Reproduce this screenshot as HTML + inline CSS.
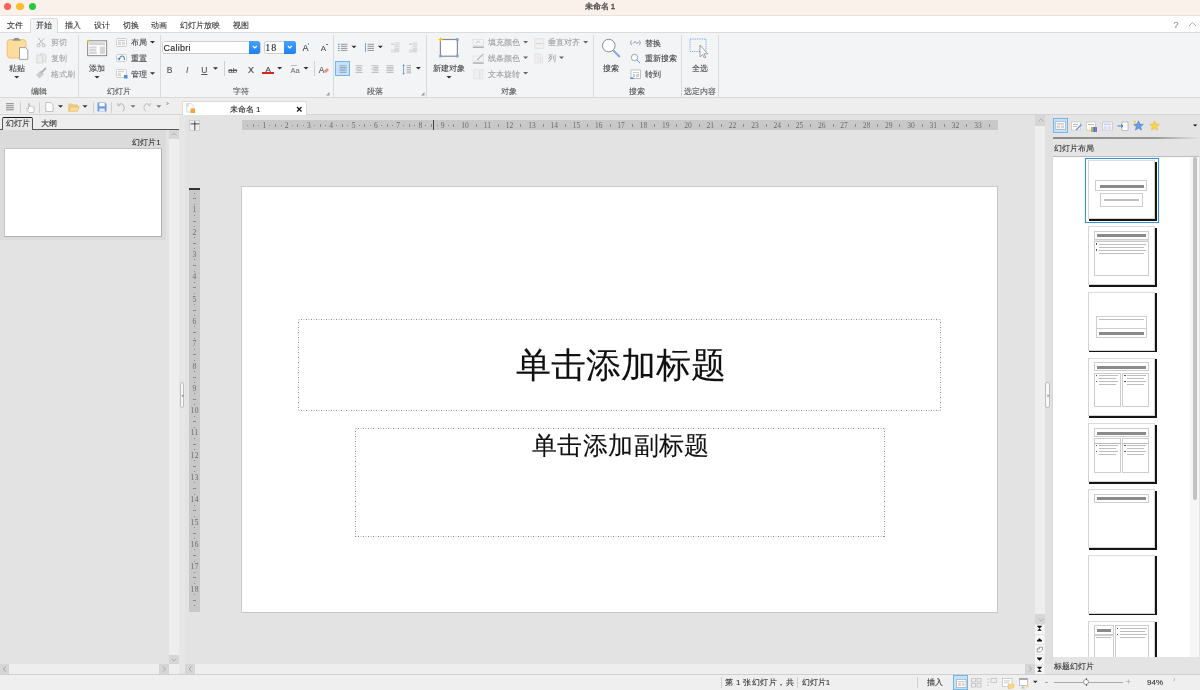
<!DOCTYPE html><html><head><meta charset="utf-8"><style>
*{margin:0;padding:0;box-sizing:border-box}
html,body{width:1200px;height:690px;overflow:hidden;background:#e3e3e3;font-family:"Liberation Sans",sans-serif;color:#333}
.a{position:absolute}
.t{position:absolute;white-space:nowrap;line-height:1;font-size:8px;-webkit-text-stroke:0.1px currentColor}
.sep{position:absolute;width:1px;background:#d6d6d6}
.arr{position:absolute;width:0;height:0;border-left:2.5px solid transparent;border-right:2.5px solid transparent;border-top:2.5px solid #333}
svg{position:absolute;overflow:visible}
</style></head><body><div style="position:absolute;left:0;top:0;width:1200px;height:690px;overflow:hidden;will-change:transform">
<div class="a" style="left:0px;top:0px;width:1200px;height:16px;background:#fbf1eb;border-bottom:1px solid #e9e2de"></div>
<div class="a" style="left:3.8px;top:3px;width:7.4px;height:7.4px;background:#fe5f57;border-radius:50%"></div>
<div class="a" style="left:16.3px;top:3px;width:7.4px;height:7.4px;background:#febc2e;border-radius:50%"></div>
<div class="a" style="left:28.8px;top:3px;width:7.4px;height:7.4px;background:#28c840;border-radius:50%"></div>
<div class="t" style="left:584.5px;top:3.30px;font-size:8px;color:#4a4a4a;-webkit-text-stroke:0.35px #4a4a4a">未命名 1</div>
<div class="a" style="left:0px;top:16px;width:1200px;height:17px;background:#fff;border-bottom:1px solid #dcdcdc"></div>
<div class="a" style="left:29.5px;top:17.5px;width:28.5px;height:16px;background:#f3f4f6;border:1px solid #dcdcdc;border-bottom:none;border-radius:2px 2px 0 0"></div>
<div class="t" style="left:7px;top:22.00px;font-size:8px;color:#333;">文件</div>
<div class="t" style="left:36px;top:22.00px;font-size:8px;color:#333;">开始</div>
<div class="t" style="left:65px;top:22.00px;font-size:8px;color:#333;">插入</div>
<div class="t" style="left:94px;top:22.00px;font-size:8px;color:#333;">设计</div>
<div class="t" style="left:122.5px;top:22.00px;font-size:8px;color:#333;">切换</div>
<div class="t" style="left:151px;top:22.00px;font-size:8px;color:#333;">动画</div>
<div class="t" style="left:180px;top:22.00px;font-size:8px;color:#333;">幻灯片放映</div>
<div class="t" style="left:233px;top:22.00px;font-size:8px;color:#333;">视图</div>
<div class="t" style="left:1173.5px;top:21.05px;font-size:9px;color:#888;">?</div>
<svg style="left:1188px;top:21px" width="10" height="6" viewBox="0 0 10 6"><path d="M1 5 L4.5 1.5 L8 5" fill="none" stroke="#aaa" stroke-width="1"/></svg>
<div class="a" style="left:0px;top:33px;width:1200px;height:65px;background:#f3f4f6;border-bottom:1px solid #d9d9d9"></div>
<div class="a" style="left:78px;top:35px;width:1px;height:62px;background:#dadada"></div>
<div class="a" style="left:159.5px;top:35px;width:1px;height:62px;background:#dadada"></div>
<div class="a" style="left:332.5px;top:35px;width:1px;height:62px;background:#dadada"></div>
<div class="a" style="left:425.5px;top:35px;width:1px;height:62px;background:#dadada"></div>
<div class="a" style="left:592.5px;top:35px;width:1px;height:62px;background:#dadada"></div>
<div class="a" style="left:681px;top:35px;width:1px;height:62px;background:#dadada"></div>
<div class="a" style="left:718px;top:35px;width:1px;height:62px;background:#dadada"></div>
<svg style="left:6px;top:37px" width="24" height="24" viewBox="0 0 24 24"><rect x="1.2" y="2.6" width="18.8" height="18.4" rx="3" fill="#fddc9c" stroke="#e6bd70" stroke-width="0.9"/><path d="M7.5 3 L8.5 1 L12.5 1 L13.5 3 Z" fill="#888"/><rect x="6.5" y="2.3" width="8" height="1.5" fill="#9a9a9a"/><path d="M13.5 10.6 L19.5 10.6 L21.8 12.9 L21.8 22.4 L13.5 22.4 Z" fill="#fff" stroke="#9a9a9a" stroke-width="0.9"/></svg>
<div class="t" style="left:8.8px;top:65.20px;font-size:8px;color:#444;">粘贴</div>
<svg style="left:0;top:0" width="1" height="1"><path d="M14.2 76.05 L19.2 76.05 L16.7 78.55 Z" fill="#333"/></svg>
<svg style="left:36px;top:37px" width="11" height="11" viewBox="0 0 11 11"><path d="M2.3 1.2 L7.5 7.2 M8 1.5 L2.8 7.2" stroke="#b0b0b0" stroke-width="0.9" fill="none"/><circle cx="2.5" cy="8.3" r="1.5" fill="none" stroke="#b0b0b0" stroke-width="0.8"/><circle cx="7.6" cy="8.3" r="1.5" fill="none" stroke="#b0b0b0" stroke-width="0.8"/></svg>
<div class="t" style="left:50.5px;top:39.30px;font-size:8px;color:#a6a6a6;">剪切</div>
<svg style="left:35.5px;top:52.5px" width="11" height="11" viewBox="0 0 11 11"><path d="M4.5 0.8 L8.5 0.8 L10 2.3 L10 8.8 L4.5 8.8 Z" fill="#e9e9e9" stroke="#cfcfcf" stroke-width="0.7"/><path d="M0.8 2 L5 2 L6.5 3.5 L6.5 10 L0.8 10 Z" fill="#ececec" stroke="#cfcfcf" stroke-width="0.7"/></svg>
<div class="t" style="left:51px;top:54.90px;font-size:8px;color:#a6a6a6;">复制</div>
<svg style="left:35px;top:67px" width="12" height="13" viewBox="0 0 12 13"><path d="M1 8 L5.5 3.5 L9 7 L4.5 11.5 Z" fill="#cdcdcd"/><path d="M6.5 5.5 L10.5 1.5" stroke="#b3b3b3" stroke-width="1.8" stroke-linecap="round"/></svg>
<div class="t" style="left:50.5px;top:70.80px;font-size:8px;color:#a6a6a6;">格式刷</div>
<div class="t" style="left:31px;top:87.90px;font-size:8px;color:#555;">编辑</div>
<svg style="left:86px;top:39px" width="22" height="18" viewBox="0 0 22 18"><rect x="1.7" y="1.8" width="19" height="14.9" fill="#fff" stroke="#7a7a7a" stroke-width="0.9"/><rect x="3.2" y="3.2" width="16" height="3" fill="#d4d4d4"/><path d="M3.2 7.5 H10.8 V9.6 H3.2Z M3.2 10.1 H10.3 V12.3 H3.2Z M3.2 12.8 H10.8 V15 H3.2Z" fill="#d6d6d6"/><rect x="13.8" y="7.5" width="5.4" height="7.5" fill="#d6d6d6"/><path d="M2.3 0 L2.9 1.7 L4.6 2.3 L2.9 2.9 L2.3 4.6 L1.7 2.9 L0 2.3 L1.7 1.7 Z" fill="#f7d23a"/></svg>
<div class="t" style="left:89.3px;top:65.20px;font-size:8px;color:#444;">添加</div>
<svg style="left:0;top:0" width="1" height="1"><path d="M94.5 76.05 L99.5 76.05 L97 78.55 Z" fill="#333"/></svg>
<svg style="left:116px;top:38px" width="11" height="9" viewBox="0 0 11 9"><rect x="0.5" y="0.5" width="10" height="8" rx="1" fill="#fafafa" stroke="#c4c4c4" stroke-width="0.8"/><rect x="2" y="2" width="7" height="1.3" fill="#d0d0d0"/><rect x="2" y="4" width="3" height="3" fill="#d8d8d8"/><rect x="6" y="4" width="3" height="3" fill="#d8d8d8"/></svg>
<div class="t" style="left:130.6px;top:39.30px;font-size:8px;color:#444;">布局</div>
<svg style="left:0;top:0" width="1" height="1"><path d="M150.0 40.95 L155.0 40.95 L152.5 43.45 Z" fill="#333"/></svg>
<svg style="left:116px;top:54px" width="11" height="8" viewBox="0 0 11 8"><rect x="0.5" y="0.5" width="10" height="7" rx="1" fill="#fafafa" stroke="#c4c4c4" stroke-width="0.8"/><path d="M3 5.5 Q4.5 1.5 6.5 2 Q8.5 2.5 8.5 6" fill="none" stroke="#4a86c5" stroke-width="1.1"/><path d="M1.3 4.3 L3.2 6.5 L4.6 4.2 Z" fill="#4a86c5"/></svg>
<div class="t" style="left:130.6px;top:55.00px;font-size:8px;color:#444;">重置</div>
<svg style="left:116px;top:69px" width="12" height="10" viewBox="0 0 12 10"><rect x="0.5" y="0.5" width="10" height="8" rx="1" fill="#fafafa" stroke="#c4c4c4" stroke-width="0.8"/><rect x="2" y="2" width="6" height="1.2" fill="#d0d0d0"/><rect x="2" y="4" width="3" height="3" fill="#dadada"/><rect x="8" y="6" width="3.5" height="3.5" fill="#4a90d9"/></svg>
<div class="t" style="left:130.6px;top:70.80px;font-size:8px;color:#444;">管理</div>
<svg style="left:0;top:0" width="1" height="1"><path d="M150.0 72.25 L155.0 72.25 L152.5 74.75 Z" fill="#333"/></svg>
<div class="t" style="left:107px;top:87.90px;font-size:8px;color:#555;">幻灯片</div>
<div class="a" style="left:161.7px;top:41.2px;width:99px;height:12.6px;background:#fff;border:1px solid #cdcdcd;border-radius:2.5px"></div>
<div class="a" style="left:249.1px;top:41px;width:11.4px;height:12.8px;background:linear-gradient(#47a3fb,#1d7ff2);border-radius:0 2.5px 2.5px 0"></div>
<svg style="left:251px;top:45px" width="8" height="5" viewBox="0 0 8 5"><path d="M1.8 1 L3.8 3 L5.8 1" fill="none" stroke="#fff" stroke-width="1.1"/></svg>
<div class="t" style="left:163.5px;top:44.15px;font-size:9px;color:#222;letter-spacing:0.25px">Calibri</div>
<div class="a" style="left:263.5px;top:41.2px;width:32px;height:12.6px;background:#fff;border:1px solid #cdcdcd;border-radius:2.5px"></div>
<div class="a" style="left:284.2px;top:41px;width:11.4px;height:12.8px;background:linear-gradient(#47a3fb,#1d7ff2);border-radius:0 2.5px 2.5px 0"></div>
<svg style="left:286px;top:45px" width="8" height="5" viewBox="0 0 8 5"><path d="M1.8 1 L3.8 3 L5.8 1" fill="none" stroke="#fff" stroke-width="1.1"/></svg>
<div class="t" style="left:265.3px;top:43.10px;font-size:10px;color:#222;font-family:Liberation Serif,serif;letter-spacing:0.9px">18</div>
<div class="t" style="left:302.6px;top:44.35px;font-size:9px;color:#444;">A</div>
<div class="a" style="left:307.5px;top:43.2px;width:1.6px;height:1.6px;background:#4a90d9;border-radius:50%"></div>
<div class="t" style="left:320.8px;top:45.20px;font-size:8px;color:#555;">A</div>
<div class="a" style="left:325.5px;top:44px;width:2.2px;height:0.8px;background:#777"></div>
<div class="t" style="left:166.8px;top:66.17px;font-size:8.5px;color:#555;">B</div>
<div class="t" style="left:186px;top:66.17px;font-size:8.5px;color:#555;font-style:italic">I</div>
<div class="t" style="left:201.3px;top:66.17px;font-size:8.5px;color:#555;text-decoration:underline">U</div>
<svg style="left:0;top:0" width="1" height="1"><path d="M213.0 67.15 L218.0 67.15 L215.5 69.65 Z" fill="#333"/></svg>
<div class="a" style="left:223.5px;top:61px;width:1px;height:15px;background:#d0d0d0"></div>
<div class="t" style="left:228.3px;top:66.80px;font-size:8px;color:#555;text-decoration:line-through">ab</div>
<div class="t" style="left:248px;top:66.15px;font-size:9px;color:#444;">X</div>
<div class="t" style="left:265.6px;top:65.80px;font-size:8px;color:#444;">A</div>
<div class="a" style="left:262.2px;top:72.3px;width:11.7px;height:2px;background:#e02020"></div>
<svg style="left:0;top:0" width="1" height="1"><path d="M277.2 67.05 L282.2 67.05 L279.7 69.55 Z" fill="#333"/></svg>
<div class="t" style="left:290.4px;top:67.02px;font-size:7.5px;color:#777;">Aa</div>
<div class="a" style="left:291px;top:64.5px;width:6px;height:0.7px;background:#bbb"></div>
<svg style="left:0;top:0" width="1" height="1"><path d="M303.5 67.05 L308.5 67.05 L306 69.55 Z" fill="#333"/></svg>
<div class="a" style="left:313.7px;top:61px;width:1px;height:15px;background:#d0d0d0"></div>
<div class="t" style="left:318.7px;top:66.17px;font-size:8.5px;color:#555;">A</div>
<svg style="left:322px;top:66px" width="8" height="8" viewBox="0 0 8 8"><path d="M2 5 L5 2 L7 4 L4 7 Z" fill="#f08888"/></svg>
<div class="t" style="left:141px;width:200px;text-align:center;top:87.90px;font-size:8px;color:#555;">字符</div>
<svg style="left:326px;top:92px" width="4" height="4" viewBox="0 0 4 4"><path d="M3.5 0 L3.5 3.5 L0 3.5 Z" fill="#999"/></svg>
<svg style="left:337px;top:43px" width="12" height="10" viewBox="0 0 12 10"><rect x="1" y="0.8" width="1.6" height="1.1" fill="#6b9bd6"/><rect x="1" y="2.8499999999999996" width="1.6" height="1.1" fill="#6b9bd6"/><rect x="1" y="4.8999999999999995" width="1.6" height="1.1" fill="#6b9bd6"/><rect x="1" y="6.949999999999999" width="1.6" height="1.1" fill="#6b9bd6"/><rect x="3.8" y="0.8" width="6.5" height="0.9" fill="#8a8a8a"/><rect x="3.8" y="2.8499999999999996" width="6.5" height="0.9" fill="#8a8a8a"/><rect x="3.8" y="4.8999999999999995" width="6.5" height="0.9" fill="#8a8a8a"/><rect x="3.8" y="6.949999999999999" width="6.5" height="0.9" fill="#8a8a8a"/></svg>
<svg style="left:0;top:0" width="1" height="1"><path d="M351.5 45.75 L356.5 45.75 L354 48.25 Z" fill="#333"/></svg>
<svg style="left:364px;top:43px" width="12" height="10" viewBox="0 0 12 10"><rect x="1" y="0" width="0.9" height="8.8" fill="#6b9bd6"/><rect x="3.5" y="0.8" width="6.5" height="0.9" fill="#8a8a8a"/><rect x="3.5" y="2.8499999999999996" width="6.5" height="0.9" fill="#8a8a8a"/><rect x="3.5" y="4.8999999999999995" width="6.5" height="0.9" fill="#8a8a8a"/><rect x="3.5" y="6.949999999999999" width="6.5" height="0.9" fill="#8a8a8a"/></svg>
<svg style="left:0;top:0" width="1" height="1"><path d="M377.8 45.75 L382.8 45.75 L380.3 48.25 Z" fill="#333"/></svg>
<svg style="left:390px;top:42px" width="12" height="11" viewBox="0 0 12 11"><rect x="1" y="1.5" width="3" height="1.2" fill="#c9c9c9"/><rect x="4.5" y="0.5" width="5" height="1" fill="#d2d2d2"/><rect x="4.5" y="2.4" width="5" height="1" fill="#d2d2d2"/><rect x="4.5" y="4.3" width="5" height="1" fill="#d2d2d2"/><rect x="4.5" y="6.199999999999999" width="5" height="1" fill="#d2d2d2"/><rect x="4.5" y="8.1" width="5" height="1" fill="#d2d2d2"/><rect x="1" y="7.5" width="8" height="1" fill="#d2d2d2"/><rect x="1" y="9.4" width="8" height="1" fill="#d2d2d2"/></svg>
<svg style="left:407.5px;top:42px" width="12" height="11" viewBox="0 0 12 11"><rect x="1" y="1.5" width="3" height="1.2" fill="#c9c9c9"/><rect x="4.5" y="0.5" width="5" height="1" fill="#d2d2d2"/><rect x="4.5" y="2.4" width="5" height="1" fill="#d2d2d2"/><rect x="4.5" y="4.3" width="5" height="1" fill="#d2d2d2"/><rect x="4.5" y="6.199999999999999" width="5" height="1" fill="#d2d2d2"/><rect x="4.5" y="8.1" width="5" height="1" fill="#d2d2d2"/><rect x="1" y="7.5" width="8" height="1" fill="#d2d2d2"/><rect x="1" y="9.4" width="8" height="1" fill="#d2d2d2"/></svg>
<div class="a" style="left:335.3px;top:61.2px;width:14.5px;height:15px;background:#c6e2fb;border:1px solid #74b4ee"></div>
<svg style="left:338.5px;top:64.5px" width="9" height="9" viewBox="0 0 9 9"><rect x="0.5" y="0.3" width="7" height="0.9" fill="#8ca3bd"/><rect x="0.5" y="1.95" width="7" height="0.9" fill="#8ca3bd"/><rect x="0.5" y="3.5999999999999996" width="7" height="0.9" fill="#8ca3bd"/><rect x="0.5" y="5.249999999999999" width="7" height="0.9" fill="#8ca3bd"/><rect x="0.5" y="6.8999999999999995" width="7" height="0.9" fill="#8ca3bd"/></svg>
<svg style="left:354.5px;top:64.5px" width="9" height="9" viewBox="0 0 9 9"><rect x="0.5" y="0.3" width="7" height="0.9" fill="#b5b5b5"/><rect x="1.5" y="1.95" width="5" height="0.9" fill="#b5b5b5"/><rect x="0.5" y="3.5999999999999996" width="7" height="0.9" fill="#b5b5b5"/><rect x="1.5" y="5.249999999999999" width="5" height="0.9" fill="#b5b5b5"/><rect x="0.5" y="6.8999999999999995" width="7" height="0.9" fill="#b5b5b5"/></svg>
<svg style="left:370.5px;top:64.5px" width="9" height="9" viewBox="0 0 9 9"><rect x="0.5" y="0.3" width="7" height="0.9" fill="#b5b5b5"/><rect x="2.5" y="1.95" width="5" height="0.9" fill="#b5b5b5"/><rect x="0.5" y="3.5999999999999996" width="7" height="0.9" fill="#b5b5b5"/><rect x="2.5" y="5.249999999999999" width="5" height="0.9" fill="#b5b5b5"/><rect x="0.5" y="6.8999999999999995" width="7" height="0.9" fill="#b5b5b5"/></svg>
<svg style="left:385.7px;top:64.5px" width="9" height="9" viewBox="0 0 9 9"><rect x="0.5" y="0.3" width="7" height="0.9" fill="#b5b5b5"/><rect x="0.5" y="1.95" width="7" height="0.9" fill="#b5b5b5"/><rect x="0.5" y="3.5999999999999996" width="7" height="0.9" fill="#b5b5b5"/><rect x="0.5" y="5.249999999999999" width="7" height="0.9" fill="#b5b5b5"/><rect x="0.5" y="6.8999999999999995" width="7" height="0.9" fill="#b5b5b5"/></svg>
<svg style="left:402px;top:63.5px" width="11" height="11" viewBox="0 0 11 11"><rect x="1.2" y="1" width="0.9" height="9" fill="#5c95d6"/><path d="M0.2 1.8 L1.65 0.3 L3.1 1.8 Z M0.2 9.3 L1.65 10.8 L3.1 9.3Z" fill="#5c95d6"/><rect x="4.5" y="1.2" width="4.5" height="0.9" fill="#a8a8a8"/><rect x="4.5" y="3.0" width="4.5" height="0.9" fill="#a8a8a8"/><rect x="4.5" y="4.8" width="4.5" height="0.9" fill="#a8a8a8"/><rect x="4.5" y="6.6000000000000005" width="4.5" height="0.9" fill="#a8a8a8"/><rect x="4.5" y="8.4" width="4.5" height="0.9" fill="#a8a8a8"/></svg>
<svg style="left:0;top:0" width="1" height="1"><path d="M415.9 67.05 L420.9 67.05 L418.4 69.55 Z" fill="#333"/></svg>
<div class="t" style="left:366.8px;top:87.90px;font-size:8px;color:#555;">段落</div>
<svg style="left:421.2px;top:92px" width="4" height="4" viewBox="0 0 4 4"><path d="M3.5 0 L3.5 3.5 L0 3.5 Z" fill="#999"/></svg>
<svg style="left:438px;top:37px" width="22" height="22" viewBox="0 0 22 22"><rect x="2.4" y="2.5" width="17" height="16.7" fill="#fff" stroke="#8a8a8a" stroke-width="1.2"/><rect x="18" y="1.2" width="2.6" height="2.6" fill="#7f9fe0"/><rect x="1.2" y="17.8" width="2.6" height="2.6" fill="#7f9fe0"/><rect x="18" y="17.8" width="2.6" height="2.6" fill="#7f9fe0"/><path d="M2.5 0 L3.2 1.8 L5 2.5 L3.2 3.2 L2.5 5 L1.8 3.2 L0 2.5 L1.8 1.8 Z" fill="#f5c400"/></svg>
<div class="t" style="left:433px;top:65.20px;font-size:8px;color:#444;">新建对象</div>
<svg style="left:0;top:0" width="1" height="1"><path d="M446.5 76.05 L451.5 76.05 L449 78.55 Z" fill="#333"/></svg>
<svg style="left:472px;top:38px" width="13" height="11" viewBox="0 0 13 11"><rect x="1" y="1.5" width="10.5" height="6" fill="#f4f4f4" stroke="#dcdcdc" stroke-width="0.7"/><path d="M4 5.5 Q6 1.5 8 5" fill="none" stroke="#b9b9b9" stroke-width="0.8"/><rect x="0.8" y="8.5" width="11" height="1.5" fill="#b0b0b0"/></svg>
<div class="t" style="left:487.5px;top:39.30px;font-size:8px;color:#a0a0a0;">填充颜色</div>
<svg style="left:0;top:0" width="1" height="1"><path d="M523.1 40.95 L528.1 40.95 L525.6 43.45 Z" fill="#666"/></svg>
<svg style="left:472px;top:52.5px" width="13" height="12" viewBox="0 0 13 12"><rect x="1" y="3" width="10.5" height="5" fill="#f4f4f4" stroke="#dcdcdc" stroke-width="0.7"/><path d="M5 7 L11.5 0.8" stroke="#b5b5b5" stroke-width="1.1"/><rect x="0.8" y="9.3" width="11" height="1.5" fill="#b0b0b0"/></svg>
<div class="t" style="left:487.5px;top:54.80px;font-size:8px;color:#a0a0a0;">线条颜色</div>
<svg style="left:0;top:0" width="1" height="1"><path d="M523.1 56.45 L528.1 56.45 L525.6 58.95 Z" fill="#666"/></svg>
<svg style="left:473px;top:68.5px" width="11" height="11" viewBox="0 0 11 11"><rect x="0.8" y="0.8" width="9" height="9" fill="#f0f0f0" stroke="#dedede" stroke-width="0.8"/><rect x="6.5" y="1.5" width="0.7" height="7.5" fill="#d0d0d0"/></svg>
<div class="t" style="left:487.5px;top:70.50px;font-size:8px;color:#a0a0a0;">文本旋转</div>
<svg style="left:0;top:0" width="1" height="1"><path d="M523.1 72.05 L528.1 72.05 L525.6 74.55 Z" fill="#666"/></svg>
<svg style="left:533.5px;top:37.5px" width="11" height="11" viewBox="0 0 11 11"><rect x="0.8" y="0.8" width="9" height="9.5" fill="#f0f0f0" stroke="#dedede" stroke-width="0.8"/><rect x="2" y="5" width="6.5" height="0.8" fill="#d0d0d0"/></svg>
<div class="t" style="left:547.5px;top:39.30px;font-size:8px;color:#a0a0a0;">垂直对齐</div>
<svg style="left:0;top:0" width="1" height="1"><path d="M583.1 40.95 L588.1 40.95 L585.6 43.45 Z" fill="#666"/></svg>
<svg style="left:534px;top:53px" width="10" height="11" viewBox="0 0 10 11"><path d="M1 1 L6 1 L8.5 3.5 L8.5 10 L1 10 Z" fill="#f0f0f0" stroke="#dedede" stroke-width="0.8"/><rect x="3.5" y="3" width="0.7" height="6" fill="#d5d5d5"/><rect x="6" y="4" width="0.7" height="5" fill="#d5d5d5"/></svg>
<div class="t" style="left:547.5px;top:54.80px;font-size:8px;color:#a0a0a0;">列</div>
<svg style="left:0;top:0" width="1" height="1"><path d="M559.0 56.45 L564.0 56.45 L561.5 58.95 Z" fill="#666"/></svg>
<div class="t" style="left:408.75px;width:200px;text-align:center;top:87.90px;font-size:8px;color:#555;">对象</div>
<svg style="left:600px;top:37px" width="22" height="22" viewBox="0 0 22 22"><circle cx="8.75" cy="8.6" r="6.3" fill="#fff" stroke="#8a8a8a" stroke-width="1"/><path d="M13.3 13.4 L19.8 20" stroke="#7ea6e6" stroke-width="1.9"/></svg>
<div class="t" style="left:511px;width:200px;text-align:center;top:65.20px;font-size:8px;color:#444;">搜索</div>
<svg style="left:630px;top:38.5px" width="11" height="8" viewBox="0 0 11 8"><path d="M1.2 1.5 Q0 4 1.5 6" fill="none" stroke="#777" stroke-width="0.7"/><path d="M9.5 1.5 Q11 4 9.5 6" fill="none" stroke="#777" stroke-width="0.7"/><path d="M3 4.5 L5 2.5 L7 4.5 L8.5 3" fill="none" stroke="#4a8ad0" stroke-width="0.9"/></svg>
<div class="t" style="left:645px;top:39.50px;font-size:8px;color:#444;">替换</div>
<svg style="left:630px;top:53px" width="11" height="11" viewBox="0 0 11 11"><circle cx="4.5" cy="4.5" r="3.2" fill="#fff" stroke="#8a8a8a" stroke-width="0.8"/><path d="M6.8 6.8 L10 10" stroke="#5a9be0" stroke-width="1"/></svg>
<div class="t" style="left:645px;top:55.00px;font-size:8px;color:#444;">重新搜索</div>
<svg style="left:629.5px;top:68.5px" width="12" height="12" viewBox="0 0 12 12"><rect x="1" y="1" width="9.5" height="8.5" fill="#fff" stroke="#b5b5b5" stroke-width="0.8"/><rect x="3" y="3" width="6" height="1" fill="#ccc"/><rect x="3" y="5" width="2" height="3" fill="#ccc"/><rect x="6" y="5" width="3" height="3" fill="#ccc"/><rect x="0.5" y="8.5" width="2.8" height="1.5" fill="#3a7bd5"/></svg>
<div class="t" style="left:645px;top:70.50px;font-size:8px;color:#444;">转到</div>
<div class="t" style="left:536.9px;width:200px;text-align:center;top:87.90px;font-size:8px;color:#555;">搜索</div>
<svg style="left:688px;top:37px" width="24" height="22" viewBox="0 0 24 22"><rect x="2" y="2" width="16" height="12.5" fill="none" stroke="#5a9be0" stroke-width="0.8" stroke-dasharray="1.3 1"/><path d="M12 8 L12 20 L14.5 17.5 L16.5 21 L17.8 20.3 L15.8 16.8 L19.5 16.8 Z" fill="#fff" stroke="#888" stroke-width="0.8" stroke-linejoin="round"/></svg>
<div class="t" style="left:599.6px;width:200px;text-align:center;top:65.20px;font-size:8px;color:#444;">全选</div>
<div class="t" style="left:599.6px;width:200px;text-align:center;top:87.90px;font-size:8px;color:#555;">选定内容</div>
<div class="a" style="left:0px;top:98px;width:1200px;height:17px;background:#eeeeee;border-bottom:1px solid #d5d5d5"></div>
<svg style="left:6px;top:103px" width="8" height="8" viewBox="0 0 8 8"><rect x="0" y="0.0" width="7.8" height="1.2" fill="#9a9a9a"/><rect x="0" y="2.05" width="7.8" height="1.2" fill="#9a9a9a"/><rect x="0" y="4.1" width="7.8" height="1.2" fill="#9a9a9a"/><rect x="0" y="6.1499999999999995" width="7.8" height="1.2" fill="#9a9a9a"/></svg>
<div class="a" style="left:20.4px;top:101.5px;width:1px;height:11.0px;background:#cfcfcf"></div>
<svg style="left:25.5px;top:101.5px" width="9" height="11" viewBox="0 0 9 11"><path d="M2.5 1.5 L2.5 7 L1 6 Q0.3 6.5 1 7.5 L3 10.5 L7.5 10.5 Q8.3 9 8 6 L8 4.8 Q7.2 4 6.4 4.8 Q5.8 4 5 4.6 Q4.2 3.9 3.6 4.5 L3.6 1.5 Q3 0.7 2.5 1.5Z" fill="#fff" stroke="#a9a9a9" stroke-width="0.7"/><circle cx="3" cy="1.2" r="1" fill="#c9d6f0"/></svg>
<div class="a" style="left:39.4px;top:101.5px;width:1px;height:11.0px;background:#cfcfcf"></div>
<svg style="left:44.5px;top:102px" width="9" height="10" viewBox="0 0 9 10"><path d="M0.8 0.5 L5.5 0.5 L8 3 L8 9.5 L0.8 9.5 Z" fill="#fff" stroke="#aaaaaa" stroke-width="0.7"/></svg>
<svg style="left:0;top:0" width="1" height="1"><path d="M58.0 105.15 L63.0 105.15 L60.5 107.65 Z" fill="#333"/></svg>
<svg style="left:67.5px;top:102.5px" width="12" height="9" viewBox="0 0 12 9"><path d="M0.8 1 L4 1 L5 2 L9.5 2 L9.5 3.5 L2.5 3.5 L0.8 8.3 Z" fill="#f4cf82" stroke="#e0b260" stroke-width="0.6"/><path d="M0.8 8.3 L2.5 3.8 L11.2 3.8 L9.5 8.3 Z" fill="#fddb97" stroke="#e0b260" stroke-width="0.6"/></svg>
<svg style="left:0;top:0" width="1" height="1"><path d="M82.5 105.15 L87.5 105.15 L85 107.65 Z" fill="#333"/></svg>
<div class="a" style="left:92.5px;top:101.5px;width:1px;height:11.0px;background:#cfcfcf"></div>
<svg style="left:97px;top:102px" width="10" height="10" viewBox="0 0 10 10"><path d="M0.5 0.5 L8 0.5 L9.5 2 L9.5 9.5 L0.5 9.5 Z" fill="#6b99e2"/><rect x="2.3" y="1" width="5.4" height="3.3" fill="#fff"/><rect x="2.3" y="6.5" width="5.4" height="3" fill="#e8eef8"/></svg>
<div class="a" style="left:111.3px;top:101.5px;width:1px;height:11.0px;background:#cfcfcf"></div>
<svg style="left:116.5px;top:102px" width="8" height="10" viewBox="0 0 8 10"><path d="M6 9.5 Q8.5 6 6.5 3 Q4.5 0.5 1.5 2.5" fill="none" stroke="#b0b0b0" stroke-width="0.9"/><path d="M0.5 0.8 L1 4 L3.5 2.8" fill="none" stroke="#b0b0b0" stroke-width="0.8"/></svg>
<svg style="left:0;top:0" width="1" height="1"><path d="M130.5 105.15 L135.5 105.15 L133 107.65 Z" fill="#777"/></svg>
<svg style="left:142.5px;top:102px" width="8" height="10" viewBox="0 0 8 10"><path d="M3 9.5 Q-0.5 6 1.5 3 Q3.5 0.5 6.5 2.5" fill="none" stroke="#bbbbbb" stroke-width="0.9"/><path d="M7.5 0.8 L7 4 L4.5 2.8" fill="none" stroke="#bbbbbb" stroke-width="0.8"/></svg>
<svg style="left:0;top:0" width="1" height="1"><path d="M156.3 105.15 L161.3 105.15 L158.8 107.65 Z" fill="#777"/></svg>
<svg style="left:166px;top:102px" width="4" height="4" viewBox="0 0 4 4"><path d="M0.5 0.5 L2.5 1.5 L0.5 2.5" fill="none" stroke="#777" stroke-width="0.7"/></svg>
<div class="a" style="left:182.3px;top:100.7px;width:125px;height:15px;background:#fff;border:1px solid #dadada;border-bottom:none;border-radius:2px 2px 0 0"></div>
<svg style="left:186px;top:103px" width="10" height="11" viewBox="0 0 10 11"><path d="M0.8 0.5 L5 0.5 L7 2.5 L7 9 L0.8 9 Z" fill="#fff" stroke="#c0c0c0" stroke-width="0.6"/><rect x="0.8" y="0.8" width="2" height="3" fill="#f7d9b0"/><rect x="4.5" y="5.5" width="4.5" height="4.5" fill="#f6a53a"/></svg>
<div class="t" style="left:145px;width:200px;text-align:center;top:105.80px;font-size:8px;color:#222;">未命名 1</div>
<svg style="left:296px;top:105.5px" width="7" height="7" viewBox="0 0 7 7"><path d="M1 1 L5.5 5.5 M5.5 1 L1 5.5" stroke="#111" stroke-width="1.1"/></svg>
<div class="a" style="left:0px;top:115px;width:179px;height:15px;background:#eeeeee"></div>
<div class="a" style="left:0px;top:129px;width:179px;height:1.2px;background:#555"></div>
<div class="a" style="left:2.3px;top:117px;width:30.7px;height:13.2px;background:#e8e8e8;border:1px solid #555;border-top:1.4px solid #1a1a1a;border-bottom:none;border-radius:2px 2px 0 0"></div>
<div class="t" style="left:6px;top:120.30px;font-size:8px;color:#333;">幻灯片</div>
<div class="t" style="left:40.8px;top:120.30px;font-size:8px;color:#333;">大纲</div>
<div class="a" style="left:0px;top:130.2px;width:169px;height:543px;background:#e3e3e3"></div>
<div class="a" style="left:0px;top:130.2px;width:166px;height:110.3px;background:#dbdbdb"></div>
<div class="t" style="left:-39.19999999999999px;width:200px;text-align:right;top:138.80px;font-size:8px;color:#333;">幻灯片1</div>
<div class="a" style="left:4px;top:148px;width:158.2px;height:89.3px;background:#fff;border:1px solid #c4c4c4;border-right:1.3px solid #b0b0b0;border-bottom:1.3px solid #b0b0b0"></div>
<div class="a" style="left:169px;top:130.2px;width:10px;height:534px;background:#eeeeee"></div>
<div class="a" style="left:169px;top:130.2px;width:10px;height:8.6px;background:#d6d6d6"></div>
<svg style="left:171px;top:132px" width="6" height="4" viewBox="0 0 6 4"><path d="M0.5 3.5 L3 1 L5.5 3.5" fill="none" stroke="#aaa" stroke-width="0.8"/></svg>
<div class="a" style="left:169px;top:654.5px;width:10px;height:9.5px;background:#d6d6d6"></div>
<svg style="left:171px;top:657.5px" width="6" height="4" viewBox="0 0 6 4"><path d="M0.5 0.5 L3 3 L5.5 0.5" fill="none" stroke="#aaa" stroke-width="0.8"/></svg>
<div class="a" style="left:0px;top:664px;width:169px;height:9.6px;background:#eeeeee"></div>
<div class="a" style="left:0px;top:664px;width:8.7px;height:9.6px;background:#d6d6d6"></div>
<svg style="left:1.8px;top:666px" width="6" height="6" viewBox="0 0 6 6"><path d="M3.8 0.6 L1.2 3 L3.8 5.4" fill="none" stroke="#999" stroke-width="0.9"/></svg>
<div class="a" style="left:159px;top:664px;width:10px;height:9.6px;background:#d6d6d6"></div>
<svg style="left:162px;top:666px" width="5" height="6" viewBox="0 0 5 6"><path d="M1 0.5 L3.5 3 L1 5.5" fill="none" stroke="#999" stroke-width="0.8"/></svg>
<div class="a" style="left:169px;top:664px;width:10px;height:9.6px;background:#eeeeee"></div>
<div class="a" style="left:179px;top:115px;width:6px;height:558px;background:#e6e6e6"></div>
<div class="a" style="left:179.6px;top:382.3px;width:4.8px;height:25.4px;background:#f7f7f7;border:1px solid #bdbdbd;border-radius:2px"></div>
<svg style="left:181px;top:393.5px" width="3" height="4" viewBox="0 0 3 4"><path d="M2.3 0.3 L0.3 1.8 L2.3 3.3 Z" fill="#8a8a8a"/></svg>
<div class="a" style="left:185px;top:115px;width:850px;height:549px;background:#e3e3e3"></div>
<div class="a" style="left:189.2px;top:119.7px;width:11.2px;height:11px;background:#efefef;border:1px solid #d0d0d0"></div>
<svg style="left:189.2px;top:119.7px" width="12" height="12" viewBox="0 0 12 12"><path d="M1.6 3.9 L10.2 3.9 M5.8 1.2 L5.8 10.2" stroke="#222" stroke-width="0.8"/></svg>
<div class="a" style="left:242px;top:120.1px;width:755.5px;height:9.9px;background:#c8c8c8"></div>
<div class="a" style="left:247.07px;top:124.6px;width:1px;height:1px;background:#8a8a8a"></div><div class="a" style="left:252.75px;top:123.6px;width:0.9px;height:3px;background:#8c8c8c"></div><div class="a" style="left:258.23px;top:124.6px;width:1px;height:1px;background:#8a8a8a"></div><div class="t" style="left:254.30px;width:20px;text-align:center;top:121.6px;font-size:7.5px;color:#6a6a6a;-webkit-text-stroke:0;font-family:Liberation Serif,serif">1</div><div class="a" style="left:269.38px;top:124.6px;width:1px;height:1px;background:#8a8a8a"></div><div class="a" style="left:275.05px;top:123.6px;width:0.9px;height:3px;background:#8c8c8c"></div><div class="a" style="left:280.52px;top:124.6px;width:1px;height:1px;background:#8a8a8a"></div><div class="t" style="left:276.60px;width:20px;text-align:center;top:121.6px;font-size:7.5px;color:#6a6a6a;-webkit-text-stroke:0;font-family:Liberation Serif,serif">2</div><div class="a" style="left:291.68px;top:124.6px;width:1px;height:1px;background:#8a8a8a"></div><div class="a" style="left:297.35px;top:123.6px;width:0.9px;height:3px;background:#8c8c8c"></div><div class="a" style="left:302.82px;top:124.6px;width:1px;height:1px;background:#8a8a8a"></div><div class="t" style="left:298.90px;width:20px;text-align:center;top:121.6px;font-size:7.5px;color:#6a6a6a;-webkit-text-stroke:0;font-family:Liberation Serif,serif">3</div><div class="a" style="left:313.98px;top:124.6px;width:1px;height:1px;background:#8a8a8a"></div><div class="a" style="left:319.65px;top:123.6px;width:0.9px;height:3px;background:#8c8c8c"></div><div class="a" style="left:325.12px;top:124.6px;width:1px;height:1px;background:#8a8a8a"></div><div class="t" style="left:321.20px;width:20px;text-align:center;top:121.6px;font-size:7.5px;color:#6a6a6a;-webkit-text-stroke:0;font-family:Liberation Serif,serif">4</div><div class="a" style="left:336.27px;top:124.6px;width:1px;height:1px;background:#8a8a8a"></div><div class="a" style="left:341.95px;top:123.6px;width:0.9px;height:3px;background:#8c8c8c"></div><div class="a" style="left:347.43px;top:124.6px;width:1px;height:1px;background:#8a8a8a"></div><div class="t" style="left:343.50px;width:20px;text-align:center;top:121.6px;font-size:7.5px;color:#6a6a6a;-webkit-text-stroke:0;font-family:Liberation Serif,serif">5</div><div class="a" style="left:358.57px;top:124.6px;width:1px;height:1px;background:#8a8a8a"></div><div class="a" style="left:364.25px;top:123.6px;width:0.9px;height:3px;background:#8c8c8c"></div><div class="a" style="left:369.73px;top:124.6px;width:1px;height:1px;background:#8a8a8a"></div><div class="t" style="left:365.80px;width:20px;text-align:center;top:121.6px;font-size:7.5px;color:#6a6a6a;-webkit-text-stroke:0;font-family:Liberation Serif,serif">6</div><div class="a" style="left:380.88px;top:124.6px;width:1px;height:1px;background:#8a8a8a"></div><div class="a" style="left:386.55px;top:123.6px;width:0.9px;height:3px;background:#8c8c8c"></div><div class="a" style="left:392.02px;top:124.6px;width:1px;height:1px;background:#8a8a8a"></div><div class="t" style="left:388.10px;width:20px;text-align:center;top:121.6px;font-size:7.5px;color:#6a6a6a;-webkit-text-stroke:0;font-family:Liberation Serif,serif">7</div><div class="a" style="left:403.18px;top:124.6px;width:1px;height:1px;background:#8a8a8a"></div><div class="a" style="left:408.85px;top:123.6px;width:0.9px;height:3px;background:#8c8c8c"></div><div class="a" style="left:414.33px;top:124.6px;width:1px;height:1px;background:#8a8a8a"></div><div class="t" style="left:410.40px;width:20px;text-align:center;top:121.6px;font-size:7.5px;color:#6a6a6a;-webkit-text-stroke:0;font-family:Liberation Serif,serif">8</div><div class="a" style="left:425.48px;top:124.6px;width:1px;height:1px;background:#8a8a8a"></div><div class="a" style="left:431.15px;top:123.6px;width:0.9px;height:3px;background:#8c8c8c"></div><div class="a" style="left:436.62px;top:124.6px;width:1px;height:1px;background:#8a8a8a"></div><div class="t" style="left:432.70px;width:20px;text-align:center;top:121.6px;font-size:7.5px;color:#6a6a6a;-webkit-text-stroke:0;font-family:Liberation Serif,serif">9</div><div class="a" style="left:447.77px;top:124.6px;width:1px;height:1px;background:#8a8a8a"></div><div class="a" style="left:453.45px;top:123.6px;width:0.9px;height:3px;background:#8c8c8c"></div><div class="t" style="left:455.00px;width:20px;text-align:center;top:121.6px;font-size:7.5px;color:#6a6a6a;-webkit-text-stroke:0;font-family:Liberation Serif,serif">10</div><div class="a" style="left:475.75px;top:123.6px;width:0.9px;height:3px;background:#8c8c8c"></div><div class="t" style="left:477.30px;width:20px;text-align:center;top:121.6px;font-size:7.5px;color:#6a6a6a;-webkit-text-stroke:0;font-family:Liberation Serif,serif">11</div><div class="a" style="left:498.05px;top:123.6px;width:0.9px;height:3px;background:#8c8c8c"></div><div class="t" style="left:499.60px;width:20px;text-align:center;top:121.6px;font-size:7.5px;color:#6a6a6a;-webkit-text-stroke:0;font-family:Liberation Serif,serif">12</div><div class="a" style="left:520.35px;top:123.6px;width:0.9px;height:3px;background:#8c8c8c"></div><div class="t" style="left:521.90px;width:20px;text-align:center;top:121.6px;font-size:7.5px;color:#6a6a6a;-webkit-text-stroke:0;font-family:Liberation Serif,serif">13</div><div class="a" style="left:542.65px;top:123.6px;width:0.9px;height:3px;background:#8c8c8c"></div><div class="t" style="left:544.20px;width:20px;text-align:center;top:121.6px;font-size:7.5px;color:#6a6a6a;-webkit-text-stroke:0;font-family:Liberation Serif,serif">14</div><div class="a" style="left:564.95px;top:123.6px;width:0.9px;height:3px;background:#8c8c8c"></div><div class="t" style="left:566.50px;width:20px;text-align:center;top:121.6px;font-size:7.5px;color:#6a6a6a;-webkit-text-stroke:0;font-family:Liberation Serif,serif">15</div><div class="a" style="left:587.25px;top:123.6px;width:0.9px;height:3px;background:#8c8c8c"></div><div class="t" style="left:588.80px;width:20px;text-align:center;top:121.6px;font-size:7.5px;color:#6a6a6a;-webkit-text-stroke:0;font-family:Liberation Serif,serif">16</div><div class="a" style="left:609.55px;top:123.6px;width:0.9px;height:3px;background:#8c8c8c"></div><div class="t" style="left:611.10px;width:20px;text-align:center;top:121.6px;font-size:7.5px;color:#6a6a6a;-webkit-text-stroke:0;font-family:Liberation Serif,serif">17</div><div class="a" style="left:631.85px;top:123.6px;width:0.9px;height:3px;background:#8c8c8c"></div><div class="t" style="left:633.40px;width:20px;text-align:center;top:121.6px;font-size:7.5px;color:#6a6a6a;-webkit-text-stroke:0;font-family:Liberation Serif,serif">18</div><div class="a" style="left:654.15px;top:123.6px;width:0.9px;height:3px;background:#8c8c8c"></div><div class="t" style="left:655.70px;width:20px;text-align:center;top:121.6px;font-size:7.5px;color:#6a6a6a;-webkit-text-stroke:0;font-family:Liberation Serif,serif">19</div><div class="a" style="left:676.45px;top:123.6px;width:0.9px;height:3px;background:#8c8c8c"></div><div class="t" style="left:678.00px;width:20px;text-align:center;top:121.6px;font-size:7.5px;color:#6a6a6a;-webkit-text-stroke:0;font-family:Liberation Serif,serif">20</div><div class="a" style="left:698.75px;top:123.6px;width:0.9px;height:3px;background:#8c8c8c"></div><div class="t" style="left:700.30px;width:20px;text-align:center;top:121.6px;font-size:7.5px;color:#6a6a6a;-webkit-text-stroke:0;font-family:Liberation Serif,serif">21</div><div class="a" style="left:721.05px;top:123.6px;width:0.9px;height:3px;background:#8c8c8c"></div><div class="t" style="left:722.60px;width:20px;text-align:center;top:121.6px;font-size:7.5px;color:#6a6a6a;-webkit-text-stroke:0;font-family:Liberation Serif,serif">22</div><div class="a" style="left:743.35px;top:123.6px;width:0.9px;height:3px;background:#8c8c8c"></div><div class="t" style="left:744.90px;width:20px;text-align:center;top:121.6px;font-size:7.5px;color:#6a6a6a;-webkit-text-stroke:0;font-family:Liberation Serif,serif">23</div><div class="a" style="left:765.65px;top:123.6px;width:0.9px;height:3px;background:#8c8c8c"></div><div class="t" style="left:767.20px;width:20px;text-align:center;top:121.6px;font-size:7.5px;color:#6a6a6a;-webkit-text-stroke:0;font-family:Liberation Serif,serif">24</div><div class="a" style="left:787.95px;top:123.6px;width:0.9px;height:3px;background:#8c8c8c"></div><div class="t" style="left:789.50px;width:20px;text-align:center;top:121.6px;font-size:7.5px;color:#6a6a6a;-webkit-text-stroke:0;font-family:Liberation Serif,serif">25</div><div class="a" style="left:810.25px;top:123.6px;width:0.9px;height:3px;background:#8c8c8c"></div><div class="t" style="left:811.80px;width:20px;text-align:center;top:121.6px;font-size:7.5px;color:#6a6a6a;-webkit-text-stroke:0;font-family:Liberation Serif,serif">26</div><div class="a" style="left:832.55px;top:123.6px;width:0.9px;height:3px;background:#8c8c8c"></div><div class="t" style="left:834.10px;width:20px;text-align:center;top:121.6px;font-size:7.5px;color:#6a6a6a;-webkit-text-stroke:0;font-family:Liberation Serif,serif">27</div><div class="a" style="left:854.85px;top:123.6px;width:0.9px;height:3px;background:#8c8c8c"></div><div class="t" style="left:856.40px;width:20px;text-align:center;top:121.6px;font-size:7.5px;color:#6a6a6a;-webkit-text-stroke:0;font-family:Liberation Serif,serif">28</div><div class="a" style="left:877.15px;top:123.6px;width:0.9px;height:3px;background:#8c8c8c"></div><div class="t" style="left:878.70px;width:20px;text-align:center;top:121.6px;font-size:7.5px;color:#6a6a6a;-webkit-text-stroke:0;font-family:Liberation Serif,serif">29</div><div class="a" style="left:899.45px;top:123.6px;width:0.9px;height:3px;background:#8c8c8c"></div><div class="t" style="left:901.00px;width:20px;text-align:center;top:121.6px;font-size:7.5px;color:#6a6a6a;-webkit-text-stroke:0;font-family:Liberation Serif,serif">30</div><div class="a" style="left:921.75px;top:123.6px;width:0.9px;height:3px;background:#8c8c8c"></div><div class="t" style="left:923.30px;width:20px;text-align:center;top:121.6px;font-size:7.5px;color:#6a6a6a;-webkit-text-stroke:0;font-family:Liberation Serif,serif">31</div><div class="a" style="left:944.05px;top:123.6px;width:0.9px;height:3px;background:#8c8c8c"></div><div class="t" style="left:945.60px;width:20px;text-align:center;top:121.6px;font-size:7.5px;color:#6a6a6a;-webkit-text-stroke:0;font-family:Liberation Serif,serif">32</div><div class="a" style="left:966.35px;top:123.6px;width:0.9px;height:3px;background:#8c8c8c"></div><div class="t" style="left:967.90px;width:20px;text-align:center;top:121.6px;font-size:7.5px;color:#6a6a6a;-webkit-text-stroke:0;font-family:Liberation Serif,serif">33</div><div class="a" style="left:988.65px;top:123.6px;width:0.9px;height:3px;background:#8c8c8c"></div>
<div class="a" style="left:432.5px;top:120px;width:1.3px;height:10px;background:#444"></div>
<div class="a" style="left:189.3px;top:188.3px;width:11px;height:423.6px;background:#c8c8c8"></div>
<div class="a" style="left:189.3px;top:187.8px;width:11px;height:1.8px;background:#333"></div>
<div class="a" style="left:194px;top:192.57px;width:1px;height:1px;background:#8a8a8a"></div><div class="a" style="left:192.8px;top:198.25px;width:3.4px;height:0.9px;background:#8c8c8c"></div><div class="a" style="left:194px;top:203.72px;width:1px;height:1px;background:#8a8a8a"></div><div class="t" style="left:184.5px;width:20px;letter-spacing:0.3px;text-indent:0.3px;text-align:center;top:206.40px;font-size:7.5px;color:#6a6a6a;-webkit-text-stroke:0;font-family:Liberation Serif,serif">1</div><div class="a" style="left:194px;top:214.88px;width:1px;height:1px;background:#8a8a8a"></div><div class="a" style="left:192.8px;top:220.55px;width:3.4px;height:0.9px;background:#8c8c8c"></div><div class="a" style="left:194px;top:226.03px;width:1px;height:1px;background:#8a8a8a"></div><div class="t" style="left:184.5px;width:20px;letter-spacing:0.3px;text-indent:0.3px;text-align:center;top:228.70px;font-size:7.5px;color:#6a6a6a;-webkit-text-stroke:0;font-family:Liberation Serif,serif">2</div><div class="a" style="left:194px;top:237.18px;width:1px;height:1px;background:#8a8a8a"></div><div class="a" style="left:192.8px;top:242.85px;width:3.4px;height:0.9px;background:#8c8c8c"></div><div class="a" style="left:194px;top:248.32px;width:1px;height:1px;background:#8a8a8a"></div><div class="t" style="left:184.5px;width:20px;letter-spacing:0.3px;text-indent:0.3px;text-align:center;top:251.00px;font-size:7.5px;color:#6a6a6a;-webkit-text-stroke:0;font-family:Liberation Serif,serif">3</div><div class="a" style="left:194px;top:259.48px;width:1px;height:1px;background:#8a8a8a"></div><div class="a" style="left:192.8px;top:265.15px;width:3.4px;height:0.9px;background:#8c8c8c"></div><div class="a" style="left:194px;top:270.62px;width:1px;height:1px;background:#8a8a8a"></div><div class="t" style="left:184.5px;width:20px;letter-spacing:0.3px;text-indent:0.3px;text-align:center;top:273.30px;font-size:7.5px;color:#6a6a6a;-webkit-text-stroke:0;font-family:Liberation Serif,serif">4</div><div class="a" style="left:194px;top:281.77px;width:1px;height:1px;background:#8a8a8a"></div><div class="a" style="left:192.8px;top:287.45px;width:3.4px;height:0.9px;background:#8c8c8c"></div><div class="a" style="left:194px;top:292.93px;width:1px;height:1px;background:#8a8a8a"></div><div class="t" style="left:184.5px;width:20px;letter-spacing:0.3px;text-indent:0.3px;text-align:center;top:295.60px;font-size:7.5px;color:#6a6a6a;-webkit-text-stroke:0;font-family:Liberation Serif,serif">5</div><div class="a" style="left:194px;top:304.07px;width:1px;height:1px;background:#8a8a8a"></div><div class="a" style="left:192.8px;top:309.75px;width:3.4px;height:0.9px;background:#8c8c8c"></div><div class="a" style="left:194px;top:315.23px;width:1px;height:1px;background:#8a8a8a"></div><div class="t" style="left:184.5px;width:20px;letter-spacing:0.3px;text-indent:0.3px;text-align:center;top:317.90px;font-size:7.5px;color:#6a6a6a;-webkit-text-stroke:0;font-family:Liberation Serif,serif">6</div><div class="a" style="left:194px;top:326.38px;width:1px;height:1px;background:#8a8a8a"></div><div class="a" style="left:192.8px;top:332.05px;width:3.4px;height:0.9px;background:#8c8c8c"></div><div class="a" style="left:194px;top:337.52px;width:1px;height:1px;background:#8a8a8a"></div><div class="t" style="left:184.5px;width:20px;letter-spacing:0.3px;text-indent:0.3px;text-align:center;top:340.20px;font-size:7.5px;color:#6a6a6a;-webkit-text-stroke:0;font-family:Liberation Serif,serif">7</div><div class="a" style="left:194px;top:348.68px;width:1px;height:1px;background:#8a8a8a"></div><div class="a" style="left:192.8px;top:354.35px;width:3.4px;height:0.9px;background:#8c8c8c"></div><div class="a" style="left:194px;top:359.83px;width:1px;height:1px;background:#8a8a8a"></div><div class="t" style="left:184.5px;width:20px;letter-spacing:0.3px;text-indent:0.3px;text-align:center;top:362.50px;font-size:7.5px;color:#6a6a6a;-webkit-text-stroke:0;font-family:Liberation Serif,serif">8</div><div class="a" style="left:194px;top:370.98px;width:1px;height:1px;background:#8a8a8a"></div><div class="a" style="left:192.8px;top:376.65px;width:3.4px;height:0.9px;background:#8c8c8c"></div><div class="a" style="left:194px;top:382.12px;width:1px;height:1px;background:#8a8a8a"></div><div class="t" style="left:184.5px;width:20px;letter-spacing:0.3px;text-indent:0.3px;text-align:center;top:384.80px;font-size:7.5px;color:#6a6a6a;-webkit-text-stroke:0;font-family:Liberation Serif,serif">9</div><div class="a" style="left:194px;top:393.27px;width:1px;height:1px;background:#8a8a8a"></div><div class="a" style="left:192.8px;top:398.95px;width:3.4px;height:0.9px;background:#8c8c8c"></div><div class="a" style="left:194px;top:404.43px;width:1px;height:1px;background:#8a8a8a"></div><div class="t" style="left:184.5px;width:20px;letter-spacing:0.3px;text-indent:0.3px;text-align:center;top:407.10px;font-size:7.5px;color:#6a6a6a;-webkit-text-stroke:0;font-family:Liberation Serif,serif">10</div><div class="a" style="left:194px;top:415.58px;width:1px;height:1px;background:#8a8a8a"></div><div class="a" style="left:192.8px;top:421.25px;width:3.4px;height:0.9px;background:#8c8c8c"></div><div class="a" style="left:194px;top:426.73px;width:1px;height:1px;background:#8a8a8a"></div><div class="t" style="left:184.5px;width:20px;letter-spacing:0.3px;text-indent:0.3px;text-align:center;top:429.40px;font-size:7.5px;color:#6a6a6a;-webkit-text-stroke:0;font-family:Liberation Serif,serif">11</div><div class="a" style="left:194px;top:437.88px;width:1px;height:1px;background:#8a8a8a"></div><div class="a" style="left:192.8px;top:443.55px;width:3.4px;height:0.9px;background:#8c8c8c"></div><div class="a" style="left:194px;top:449.03px;width:1px;height:1px;background:#8a8a8a"></div><div class="t" style="left:184.5px;width:20px;letter-spacing:0.3px;text-indent:0.3px;text-align:center;top:451.70px;font-size:7.5px;color:#6a6a6a;-webkit-text-stroke:0;font-family:Liberation Serif,serif">12</div><div class="a" style="left:194px;top:460.18px;width:1px;height:1px;background:#8a8a8a"></div><div class="a" style="left:192.8px;top:465.85px;width:3.4px;height:0.9px;background:#8c8c8c"></div><div class="a" style="left:194px;top:471.32px;width:1px;height:1px;background:#8a8a8a"></div><div class="t" style="left:184.5px;width:20px;letter-spacing:0.3px;text-indent:0.3px;text-align:center;top:474.00px;font-size:7.5px;color:#6a6a6a;-webkit-text-stroke:0;font-family:Liberation Serif,serif">13</div><div class="a" style="left:194px;top:482.48px;width:1px;height:1px;background:#8a8a8a"></div><div class="a" style="left:192.8px;top:488.15px;width:3.4px;height:0.9px;background:#8c8c8c"></div><div class="a" style="left:194px;top:493.62px;width:1px;height:1px;background:#8a8a8a"></div><div class="t" style="left:184.5px;width:20px;letter-spacing:0.3px;text-indent:0.3px;text-align:center;top:496.30px;font-size:7.5px;color:#6a6a6a;-webkit-text-stroke:0;font-family:Liberation Serif,serif">14</div><div class="a" style="left:194px;top:504.78px;width:1px;height:1px;background:#8a8a8a"></div><div class="a" style="left:192.8px;top:510.45px;width:3.4px;height:0.9px;background:#8c8c8c"></div><div class="a" style="left:194px;top:515.92px;width:1px;height:1px;background:#8a8a8a"></div><div class="t" style="left:184.5px;width:20px;letter-spacing:0.3px;text-indent:0.3px;text-align:center;top:518.60px;font-size:7.5px;color:#6a6a6a;-webkit-text-stroke:0;font-family:Liberation Serif,serif">15</div><div class="a" style="left:194px;top:527.08px;width:1px;height:1px;background:#8a8a8a"></div><div class="a" style="left:192.8px;top:532.75px;width:3.4px;height:0.9px;background:#8c8c8c"></div><div class="a" style="left:194px;top:538.23px;width:1px;height:1px;background:#8a8a8a"></div><div class="t" style="left:184.5px;width:20px;letter-spacing:0.3px;text-indent:0.3px;text-align:center;top:540.90px;font-size:7.5px;color:#6a6a6a;-webkit-text-stroke:0;font-family:Liberation Serif,serif">16</div><div class="a" style="left:194px;top:549.38px;width:1px;height:1px;background:#8a8a8a"></div><div class="a" style="left:192.8px;top:555.05px;width:3.4px;height:0.9px;background:#8c8c8c"></div><div class="a" style="left:194px;top:560.53px;width:1px;height:1px;background:#8a8a8a"></div><div class="t" style="left:184.5px;width:20px;letter-spacing:0.3px;text-indent:0.3px;text-align:center;top:563.20px;font-size:7.5px;color:#6a6a6a;-webkit-text-stroke:0;font-family:Liberation Serif,serif">17</div><div class="a" style="left:194px;top:571.67px;width:1px;height:1px;background:#8a8a8a"></div><div class="a" style="left:192.8px;top:577.35px;width:3.4px;height:0.9px;background:#8c8c8c"></div><div class="a" style="left:194px;top:582.83px;width:1px;height:1px;background:#8a8a8a"></div><div class="t" style="left:184.5px;width:20px;letter-spacing:0.3px;text-indent:0.3px;text-align:center;top:585.50px;font-size:7.5px;color:#6a6a6a;-webkit-text-stroke:0;font-family:Liberation Serif,serif">18</div><div class="a" style="left:194px;top:593.98px;width:1px;height:1px;background:#8a8a8a"></div><div class="a" style="left:192.8px;top:599.65px;width:3.4px;height:0.9px;background:#8c8c8c"></div><div class="a" style="left:194px;top:605.12px;width:1px;height:1px;background:#8a8a8a"></div>
<div class="a" style="left:241px;top:186px;width:757px;height:427px;background:#fff;border-top:1px solid #cccccc;border-left:1px solid #cccccc;border-right:1px solid #c6c6c6;border-bottom:1px solid #c6c6c6"></div>
<svg style="left:298px;top:319px" width="643" height="92"><path d="M0 0.5 H643 M0 91.5 H643 M0.5 0 V92 M642.5 0 V92" fill="none" stroke="#d9d9d9" stroke-width="1" stroke-dasharray="2 3"/><path d="M0 0.5 H643 M0 91.5 H643 M0.5 0 V92 M642.5 0 V92" fill="none" stroke="#8a8a8a" stroke-width="1" stroke-dasharray="1 4" stroke-dashoffset="-3"/></svg>
<div class="t" style="left:516.3px;top:346.75px;font-size:35px;color:#111;">单击添加标题</div>
<svg style="left:355px;top:428px" width="530" height="109"><path d="M0 0.5 H530 M0 108.5 H530 M0.5 0 V109 M529.5 0 V109" fill="none" stroke="#d9d9d9" stroke-width="1" stroke-dasharray="2 3"/><path d="M0 0.5 H530 M0 108.5 H530 M0.5 0 V109 M529.5 0 V109" fill="none" stroke="#8a8a8a" stroke-width="1" stroke-dasharray="1 4" stroke-dashoffset="-3"/></svg>
<div class="t" style="left:532px;top:433.05px;font-size:25px;color:#111;letter-spacing:0.38px">单击添加副标题</div>
<div class="a" style="left:1035.2px;top:115px;width:9.6px;height:558.5px;background:#eeeeee"></div>
<div class="a" style="left:1035.2px;top:115px;width:9.6px;height:10.7px;background:#d6d6d6"></div>
<svg style="left:1037.5px;top:118px" width="6" height="4" viewBox="0 0 6 4"><path d="M0.5 3.5 L3 1 L5.5 3.5" fill="none" stroke="#aaa" stroke-width="0.8"/></svg>
<div class="a" style="left:1035.2px;top:614.3px;width:9.6px;height:9.8px;background:#d6d6d6"></div>
<svg style="left:1037.5px;top:617.5px" width="6" height="4" viewBox="0 0 6 4"><path d="M0.5 0.5 L3 3 L5.5 0.5" fill="none" stroke="#aaa" stroke-width="0.8"/></svg>
<div class="a" style="left:1035px;top:623.8px;width:9.4px;height:10px;background:#f6f6f6;border-top:0.6px solid #e2e2e2"></div>
<svg style="left:1036.3px;top:625.4px" width="7" height="7" viewBox="0 0 7 7"><path d="M1.2 0.8 H5.8 V1.6 H1.2Z M1.2 1.6 L5.8 1.6 L3.5 3.6 Z M1.2 5.8 L5.8 5.8 L3.5 3.6 Z" fill="#111"/></svg>
<div class="a" style="left:1035px;top:634.0px;width:9.4px;height:10px;background:#f6f6f6;border-top:0.6px solid #e2e2e2"></div>
<svg style="left:1036.3px;top:635.6px" width="7" height="7" viewBox="0 0 7 7"><path d="M1 4.6 L3.5 2.2 L6 4.6 Z M1 4.6 H6 V5.4 H1Z" fill="#111"/></svg>
<div class="a" style="left:1035px;top:644.2px;width:9.4px;height:10px;background:#f6f6f6;border-top:0.6px solid #e2e2e2"></div>
<svg style="left:1036.3px;top:645.8000000000001px" width="7" height="7" viewBox="0 0 7 7"><path d="M1.2 3 L3.5 1.2 L6.5 1.2 L6.5 4 L4.2 6 L1.2 6 Z" fill="#fff" stroke="#666" stroke-width="0.6"/><path d="M3.5 1.2 L3.5 3 L1.2 3" fill="none" stroke="#666" stroke-width="0.5"/></svg>
<div class="a" style="left:1035px;top:654.4px;width:9.4px;height:10px;background:#f6f6f6;border-top:0.6px solid #e2e2e2"></div>
<svg style="left:1036.3px;top:656.0px" width="7" height="7" viewBox="0 0 7 7"><path d="M1 2.2 L6 2.2 L3.5 4.8 Z M1 1.4 H6 V2.2 H1Z" fill="#111"/></svg>
<div class="a" style="left:1035px;top:664.6px;width:9.4px;height:10px;background:#f6f6f6;border-top:0.6px solid #e2e2e2"></div>
<svg style="left:1036.3px;top:666.2px" width="7" height="7" viewBox="0 0 7 7"><path d="M1.2 0.8 H5.8 V1.6 H1.2Z M1.2 1.6 L5.8 1.6 L3.5 3.6 Z M1.2 5.8 L5.8 5.8 L3.5 3.6 Z" fill="#111"/></svg>
<div class="a" style="left:185px;top:664px;width:850.2px;height:9.6px;background:#eeeeee"></div>
<div class="a" style="left:185px;top:664px;width:10px;height:9.6px;background:#d6d6d6"></div>
<svg style="left:188px;top:666px" width="5" height="6" viewBox="0 0 5 6"><path d="M3.5 0.5 L1 3 L3.5 5.5" fill="none" stroke="#999" stroke-width="0.8"/></svg>
<div class="a" style="left:1025.2px;top:664px;width:10px;height:9.6px;background:#d6d6d6"></div>
<svg style="left:1028px;top:666px" width="5" height="6" viewBox="0 0 5 6"><path d="M1 0.5 L3.5 3 L1 5.5" fill="none" stroke="#999" stroke-width="0.8"/></svg>
<div class="a" style="left:1044.8px;top:115px;width:155.2px;height:558.5px;background:#e4e4e4"></div>
<div class="a" style="left:1044.8px;top:115px;width:8.5px;height:549px;background:#e0e0e0"></div>
<div class="a" style="left:1045.3px;top:382.3px;width:5.1px;height:25.4px;background:#f7f7f7;border:1px solid #bdbdbd;border-radius:2px"></div>
<svg style="left:1046.8px;top:393.5px" width="3" height="4" viewBox="0 0 3 4"><path d="M0.5 0.3 L2.5 1.8 L0.5 3.3 Z" fill="#8a8a8a"/></svg>
<div class="a" style="left:1052.2px;top:155.5px;width:1.8px;height:502px;background:#d8d8d8"></div>
<div class="a" style="left:1053px;top:118px;width:14.7px;height:14.7px;background:#c6e2fb;border:1px solid #74b4ee"></div>
<svg style="left:1055px;top:121px" width="11" height="9" viewBox="0 0 11 9"><rect x="0.8" y="0.5" width="9.5" height="8" fill="#fff" stroke="#a9a9a9" stroke-width="0.7"/><rect x="2" y="2" width="7" height="1.5" fill="#ccc"/><rect x="2" y="4.3" width="3" height="3" fill="#d5d5d5"/><rect x="6" y="4.3" width="3" height="3" fill="#d5d5d5"/></svg>
<svg style="left:1071px;top:120.5px" width="12" height="11" viewBox="0 0 12 11"><rect x="0.5" y="1" width="9" height="8" fill="#fff" stroke="#bbb" stroke-width="0.6"/><rect x="2" y="3" width="5" height="0.8" fill="#aaa"/><rect x="2" y="5" width="4" height="0.8" fill="#aaa"/><path d="M5 9 L10.5 3.5" stroke="#6a8fe0" stroke-width="1.2"/></svg>
<svg style="left:1086px;top:120.5px" width="12" height="12" viewBox="0 0 12 12"><rect x="0.5" y="1" width="9" height="8" fill="#fff" stroke="#bbb" stroke-width="0.6"/><rect x="2" y="3" width="6" height="0.8" fill="#aaa"/><rect x="5" y="6" width="1.5" height="5" fill="#e94"/><rect x="6.5" y="6" width="1.5" height="5" fill="#5b5"/><rect x="8" y="6" width="1.5" height="5" fill="#46c"/><rect x="9.5" y="6" width="1.5" height="5" fill="#a5d"/></svg>
<svg style="left:1102px;top:120.5px" width="11" height="10" viewBox="0 0 11 10"><rect x="0.5" y="1" width="10" height="8" fill="#f4f4ff" stroke="#bbb" stroke-width="0.6"/><rect x="2" y="2.5" width="7" height="1.5" fill="#c8d4ee"/><rect x="2" y="5" width="3" height="3" fill="#d8e0f0"/><rect x="6" y="5" width="3" height="3" fill="#d8e0f0"/></svg>
<svg style="left:1117px;top:120.5px" width="12" height="11" viewBox="0 0 12 11"><rect x="5" y="1" width="6" height="8.5" fill="#fff" stroke="#999" stroke-width="0.6"/><path d="M0.5 5 L6 5 M4 3.5 L6 5 L4 6.5" fill="none" stroke="#3a76b8" stroke-width="0.9"/></svg>
<svg style="left:1133px;top:120px" width="11" height="11" viewBox="0 0 11 11"><path d="M5.5 0.8 L6.9 4.1 L10.4 4.4 L7.7 6.7 L8.6 10.1 L5.5 8.3 L2.4 10.1 L3.3 6.7 L0.6 4.4 L4.1 4.1 Z" fill="#6b9ae0" stroke="#4a7ac8" stroke-width="0.5"/><circle cx="1.8" cy="1.8" r="1.2" fill="#f5d040"/></svg>
<svg style="left:1149px;top:120px" width="11" height="11" viewBox="0 0 11 11"><path d="M5.5 0.8 L6.9 4.1 L10.4 4.4 L7.7 6.7 L8.6 10.1 L5.5 8.3 L2.4 10.1 L3.3 6.7 L0.6 4.4 L4.1 4.1 Z" fill="#fbd34a" stroke="#e0b030" stroke-width="0.5"/></svg>
<svg style="left:0;top:0" width="1" height="1"><path d="M1192.95 124.4 L1197.45 124.4 L1195.2 126.6 Z" fill="#111"/></svg>
<div class="a" style="left:1053px;top:137.1px;width:147px;height:1.6px;background:linear-gradient(90deg,#8a8a8a,#9a9a9a 70%,#e4e4e4)"></div>
<div class="t" style="left:1053.75px;top:145.40px;font-size:8px;color:#333;">幻灯片布局</div>
<div class="a" style="left:1053px;top:155.5px;width:146px;height:502px;background:#fff;border-top:1px solid #bdbdbd"></div>
<div class="a" style="left:1190.2px;top:156.5px;width:8.5px;height:501px;background:#f6f6f6"></div>
<div class="a" style="left:1192.8px;top:157.4px;width:4.6px;height:342.6px;background:#c2c2c2;border-radius:2.3px"></div>
<div class="a" style="left:0;top:0;width:1200px;height:657.3px;overflow:hidden">
<div class="a" style="left:1087.5px;top:160.4px;width:67.8px;height:58.8px;background:#fff;border:1px solid #d4d4d4;border-top-color:#dcdcdc"></div>
<div class="a" style="left:1155.3px;top:161.9px;width:1.7px;height:59.0px;background:#151515"></div>
<div class="a" style="left:1089.0px;top:219.2px;width:68.0px;height:1.7px;background:#151515"></div>
<div class="a" style="left:1095.40px;top:180.30px;width:51.40px;height:11.20px;border:1px solid #cdcdcd"></div><div class="a" style="left:1099.50px;top:184.50px;width:44.00px;height:3.00px;background:#8a8a8a"></div><div class="a" style="left:1100.20px;top:193.30px;width:42.60px;height:13.40px;border:1px solid #cdcdcd"></div><div class="a" style="left:1104.00px;top:199.00px;width:35.00px;height:2.00px;background:#bdbdbd"></div>
<div class="a" style="left:1084.8px;top:158.1px;width:74px;height:65px;border:1.6px solid #3d8fd6;box-shadow:0 0 1px #9ee0ff, inset 0 0 1px #9ee0ff"></div>
<div class="a" style="left:1087.5px;top:226.15px;width:67.8px;height:58.8px;background:#fff;border:1px solid #d4d4d4;border-top-color:#dcdcdc"></div>
<div class="a" style="left:1155.3px;top:227.65px;width:1.7px;height:59.0px;background:#151515"></div>
<div class="a" style="left:1089.0px;top:284.95px;width:68.0px;height:1.7px;background:#151515"></div>
<div class="a" style="left:1094.10px;top:230.85px;width:54.50px;height:8.70px;border:1px solid #cdcdcd"></div><div class="a" style="left:1097.10px;top:234.35px;width:48.50px;height:3.00px;background:#8a8a8a"></div><div class="a" style="left:1094.10px;top:239.55px;width:54.50px;height:1.80px;background:#e4e4e4"></div><div class="a" style="left:1094.10px;top:240.75px;width:54.50px;height:35.60px;border:1px solid #cdcdcd"></div><div class="a" style="left:1096.10px;top:243.45px;width:1.30px;height:1.30px;background:#555"></div><div class="a" style="left:1098.90px;top:243.55px;width:47.50px;height:1.00px;background:#bdbdbd"></div><div class="a" style="left:1098.90px;top:246.65px;width:45.50px;height:1.00px;background:#bdbdbd"></div><div class="a" style="left:1096.10px;top:249.45px;width:1.30px;height:1.30px;background:#555"></div><div class="a" style="left:1098.90px;top:249.55px;width:47.50px;height:1.00px;background:#bdbdbd"></div><div class="a" style="left:1098.90px;top:252.75px;width:45.50px;height:1.00px;background:#bdbdbd"></div>
<div class="a" style="left:1087.5px;top:291.9px;width:67.8px;height:58.8px;background:#fff;border:1px solid #d4d4d4;border-top-color:#dcdcdc"></div>
<div class="a" style="left:1155.3px;top:293.4px;width:1.7px;height:59.0px;background:#151515"></div>
<div class="a" style="left:1089.0px;top:350.7px;width:68.0px;height:1.7px;background:#151515"></div>
<div class="a" style="left:1096.10px;top:316.10px;width:51.30px;height:22.30px;border:1px solid #cdcdcd"></div><div class="a" style="left:1096.10px;top:328.10px;width:51.30px;height:1.00px;background:#cdcdcd"></div><div class="a" style="left:1099.00px;top:318.50px;width:45.00px;height:1.20px;background:#bdbdbd"></div><div class="a" style="left:1099.00px;top:331.70px;width:45.00px;height:3.00px;background:#8a8a8a"></div>
<div class="a" style="left:1087.5px;top:357.65px;width:67.8px;height:58.8px;background:#fff;border:1px solid #d4d4d4;border-top-color:#dcdcdc"></div>
<div class="a" style="left:1155.3px;top:359.15px;width:1.7px;height:59.0px;background:#151515"></div>
<div class="a" style="left:1089.0px;top:416.45px;width:68.0px;height:1.7px;background:#151515"></div>
<div class="a" style="left:1094.10px;top:362.35px;width:54.50px;height:8.70px;border:1px solid #cdcdcd"></div><div class="a" style="left:1097.10px;top:365.85px;width:48.50px;height:3.00px;background:#8a8a8a"></div><div class="a" style="left:1094.10px;top:372.75px;width:26.50px;height:34.70px;border:1px solid #cdcdcd"></div><div class="a" style="left:1122.30px;top:372.75px;width:26.30px;height:34.70px;border:1px solid #cdcdcd"></div><div class="a" style="left:1096.10px;top:374.75px;width:1.30px;height:1.30px;background:#555"></div><div class="a" style="left:1098.90px;top:374.85px;width:19.50px;height:1.00px;background:#bdbdbd"></div><div class="a" style="left:1098.90px;top:377.95px;width:17.50px;height:1.00px;background:#bdbdbd"></div><div class="a" style="left:1096.10px;top:380.95px;width:1.30px;height:1.30px;background:#555"></div><div class="a" style="left:1098.90px;top:381.05px;width:19.50px;height:1.00px;background:#bdbdbd"></div><div class="a" style="left:1098.90px;top:384.25px;width:17.50px;height:1.00px;background:#bdbdbd"></div><div class="a" style="left:1124.30px;top:374.75px;width:1.30px;height:1.30px;background:#555"></div><div class="a" style="left:1127.10px;top:374.85px;width:19.30px;height:1.00px;background:#bdbdbd"></div><div class="a" style="left:1127.10px;top:377.95px;width:17.30px;height:1.00px;background:#bdbdbd"></div><div class="a" style="left:1124.30px;top:380.95px;width:1.30px;height:1.30px;background:#555"></div><div class="a" style="left:1127.10px;top:381.05px;width:19.30px;height:1.00px;background:#bdbdbd"></div><div class="a" style="left:1127.10px;top:384.25px;width:17.30px;height:1.00px;background:#bdbdbd"></div>
<div class="a" style="left:1087.5px;top:423.4px;width:67.8px;height:58.8px;background:#fff;border:1px solid #d4d4d4;border-top-color:#dcdcdc"></div>
<div class="a" style="left:1155.3px;top:424.9px;width:1.7px;height:59.0px;background:#151515"></div>
<div class="a" style="left:1089.0px;top:482.2px;width:68.0px;height:1.7px;background:#151515"></div>
<div class="a" style="left:1094.10px;top:428.10px;width:54.50px;height:8.70px;border:1px solid #cdcdcd"></div><div class="a" style="left:1097.10px;top:431.60px;width:48.50px;height:3.00px;background:#8a8a8a"></div><div class="a" style="left:1094.10px;top:437.80px;width:26.50px;height:35.60px;border:1px solid #cdcdcd"></div><div class="a" style="left:1122.30px;top:437.80px;width:26.30px;height:35.60px;border:1px solid #cdcdcd"></div><div class="a" style="left:1094.10px;top:442.70px;width:26.50px;height:1.00px;background:#bbb"></div><div class="a" style="left:1122.30px;top:442.70px;width:26.30px;height:1.00px;background:#bbb"></div><div class="a" style="left:1096.10px;top:444.50px;width:1.30px;height:1.30px;background:#555"></div><div class="a" style="left:1098.90px;top:444.60px;width:19.50px;height:1.00px;background:#bdbdbd"></div><div class="a" style="left:1098.90px;top:447.80px;width:17.50px;height:1.00px;background:#bdbdbd"></div><div class="a" style="left:1096.10px;top:451.00px;width:1.30px;height:1.30px;background:#555"></div><div class="a" style="left:1098.90px;top:451.10px;width:19.50px;height:1.00px;background:#bdbdbd"></div><div class="a" style="left:1098.90px;top:454.30px;width:17.50px;height:1.00px;background:#bdbdbd"></div><div class="a" style="left:1124.30px;top:444.50px;width:1.30px;height:1.30px;background:#555"></div><div class="a" style="left:1127.10px;top:444.60px;width:19.30px;height:1.00px;background:#bdbdbd"></div><div class="a" style="left:1127.10px;top:447.80px;width:17.30px;height:1.00px;background:#bdbdbd"></div><div class="a" style="left:1124.30px;top:451.00px;width:1.30px;height:1.30px;background:#555"></div><div class="a" style="left:1127.10px;top:451.10px;width:19.30px;height:1.00px;background:#bdbdbd"></div><div class="a" style="left:1127.10px;top:454.30px;width:17.30px;height:1.00px;background:#bdbdbd"></div>
<div class="a" style="left:1087.5px;top:489.15px;width:67.8px;height:58.8px;background:#fff;border:1px solid #d4d4d4;border-top-color:#dcdcdc"></div>
<div class="a" style="left:1155.3px;top:490.65px;width:1.7px;height:59.0px;background:#151515"></div>
<div class="a" style="left:1089.0px;top:547.9499999999999px;width:68.0px;height:1.7px;background:#151515"></div>
<div class="a" style="left:1094.10px;top:493.85px;width:54.50px;height:8.70px;border:1px solid #cdcdcd"></div><div class="a" style="left:1097.10px;top:497.35px;width:48.50px;height:3.00px;background:#8a8a8a"></div>
<div class="a" style="left:1087.5px;top:554.9px;width:67.8px;height:58.8px;background:#fff;border:1px solid #d4d4d4;border-top-color:#dcdcdc"></div>
<div class="a" style="left:1155.3px;top:556.4px;width:1.7px;height:59.0px;background:#151515"></div>
<div class="a" style="left:1089.0px;top:613.6999999999999px;width:68.0px;height:1.7px;background:#151515"></div>

<div class="a" style="left:1087.5px;top:620.65px;width:67.8px;height:58.8px;background:#fff;border:1px solid #d4d4d4;border-top-color:#dcdcdc"></div>
<div class="a" style="left:1155.3px;top:622.15px;width:1.7px;height:59.0px;background:#151515"></div>
<div class="a" style="left:1089.0px;top:679.4499999999999px;width:68.0px;height:1.7px;background:#151515"></div>
<div class="a" style="left:1094.40px;top:625.35px;width:19.90px;height:9.20px;border:1px solid #cdcdcd"></div><div class="a" style="left:1097.30px;top:629.15px;width:13.90px;height:2.60px;background:#8a8a8a"></div><div class="a" style="left:1094.40px;top:634.55px;width:19.90px;height:40.00px;border:1px solid #cdcdcd"></div><div class="a" style="left:1096.00px;top:636.95px;width:15.00px;height:1.00px;background:#bdbdbd"></div><div class="a" style="left:1114.70px;top:625.35px;width:34.00px;height:45.00px;border:1px solid #cdcdcd"></div><div class="a" style="left:1116.70px;top:627.85px;width:1.30px;height:1.30px;background:#555"></div><div class="a" style="left:1119.50px;top:627.95px;width:27.00px;height:1.00px;background:#bdbdbd"></div><div class="a" style="left:1119.50px;top:630.65px;width:25.00px;height:1.00px;background:#bdbdbd"></div><div class="a" style="left:1116.70px;top:633.55px;width:1.30px;height:1.30px;background:#555"></div><div class="a" style="left:1119.50px;top:633.65px;width:27.00px;height:1.00px;background:#bdbdbd"></div><div class="a" style="left:1119.50px;top:636.95px;width:25.00px;height:1.00px;background:#bdbdbd"></div>
</div>
<div class="a" style="left:1053px;top:657.3px;width:147px;height:16.2px;background:#e4e4e4"></div>
<div class="t" style="left:1053.5px;top:663.00px;font-size:8px;color:#333;">标题幻灯片</div>
<div class="a" style="left:0px;top:673.5px;width:1200px;height:16.5px;background:#efefef;border-top:1px solid #d0d0d0"></div>
<div class="a" style="left:721.3px;top:677px;width:1px;height:11px;background:#cfcfcf"></div>
<div class="t" style="left:724.8px;top:679.00px;font-size:8px;color:#333;letter-spacing:0.45px">第 1 张幻灯片，共</div>
<div class="a" style="left:797.3px;top:677px;width:1px;height:11px;background:#cfcfcf"></div>
<div class="t" style="left:801.7px;top:679.00px;font-size:8px;color:#333;">幻灯片1</div>
<div class="a" style="left:916.7px;top:677px;width:1px;height:11px;background:#cfcfcf"></div>
<div class="t" style="left:926.6px;top:679.00px;font-size:8px;color:#333;">插入</div>
<div class="a" style="left:953.2px;top:675px;width:14.7px;height:15px;background:#c6e2fb;border:1px solid #74b4ee"></div>
<svg style="left:955.5px;top:678.5px" width="11" height="9" viewBox="0 0 11 9"><rect x="0.5" y="0.5" width="9.5" height="8" fill="#fff" stroke="#a9a9a9" stroke-width="0.7"/><rect x="2" y="2" width="6.5" height="1.3" fill="#ccc"/><rect x="2" y="4" width="3" height="3" fill="#d5d5d5"/><rect x="6" y="4" width="2.5" height="3" fill="#d5d5d5"/></svg>
<svg style="left:971px;top:677.5px" width="11" height="10" viewBox="0 0 11 10"><rect x="0.5" y="0.5" width="4" height="3.5" fill="none" stroke="#bbb" stroke-width="0.7"/><rect x="6" y="0.5" width="4" height="3.5" fill="none" stroke="#bbb" stroke-width="0.7"/><rect x="0.5" y="5.5" width="4" height="3.5" fill="none" stroke="#bbb" stroke-width="0.7"/><rect x="6" y="5.5" width="4" height="3.5" fill="none" stroke="#bbb" stroke-width="0.7"/></svg>
<svg style="left:987px;top:677.5px" width="11" height="10" viewBox="0 0 11 10"><rect x="0.5" y="0.5" width="1.5" height="1.5" fill="#ccc"/><rect x="0.5" y="3.5" width="1.5" height="1.5" fill="#ccc"/><rect x="0.5" y="6.5" width="1.5" height="1.5" fill="#ccc"/><rect x="4" y="0.5" width="5.5" height="4" fill="none" stroke="#bbb" stroke-width="0.7"/></svg>
<svg style="left:1002px;top:677.5px" width="13" height="11" viewBox="0 0 13 11"><rect x="0.5" y="0.5" width="9.5" height="8" fill="#fff" stroke="#bbb" stroke-width="0.7"/><rect x="2" y="2.5" width="6" height="0.8" fill="#bbb"/><rect x="2" y="4.5" width="5" height="0.8" fill="#bbb"/><path d="M6 6 L12 6 L12 9 L10 10.5 L6 10.5 Z" fill="#f9d68a" stroke="#e8b860" stroke-width="0.4"/></svg>
<svg style="left:1018.5px;top:677.5px" width="12" height="11" viewBox="0 0 12 11"><rect x="0.5" y="0.5" width="8" height="7" fill="#fff" stroke="#aaa" stroke-width="0.7"/><rect x="0.5" y="0.5" width="8" height="1.2" fill="#888"/><path d="M4 8 L4 10 M2 10 L6 10" stroke="#aaa" stroke-width="0.7"/><path d="M7 6.5 L10.5 8.2 L7 10 Z" fill="#f9d68a"/></svg>
<svg style="left:0;top:0" width="1" height="1"><path d="M1033.05 680.75 L1037.55 680.75 L1035.3 683.25 Z" fill="#333"/></svg>
<div class="a" style="left:1045px;top:682px;width:3px;height:0.8px;background:#aaa"></div>
<div class="a" style="left:1053.8px;top:681.6px;width:69.2px;height:1px;background:#a8a8a8"></div>
<div class="a" style="left:1083.2px;top:678.8px;width:6px;height:6px;background:#fff;border:1px solid #999;border-radius:50%"></div>
<div class="a" style="left:1085.8px;top:677.5px;width:0.8px;height:2px;background:#666"></div>
<div class="a" style="left:1085.8px;top:684px;width:0.8px;height:2px;background:#666"></div>
<svg style="left:1126px;top:679px" width="5" height="5" viewBox="0 0 5 5"><path d="M0.3 2.5 L4.7 2.5 M2.5 0.3 L2.5 4.7" stroke="#aaa" stroke-width="0.7"/></svg>
<div class="t" style="left:1147px;top:679.20px;font-size:8px;color:#333;">94%</div>
<svg style="left:1173px;top:677.5px" width="3" height="4" viewBox="0 0 3 4"><path d="M0.5 0.5 L2 1.8 L0.5 3" fill="none" stroke="#888" stroke-width="0.6"/></svg>
</div></body></html>
